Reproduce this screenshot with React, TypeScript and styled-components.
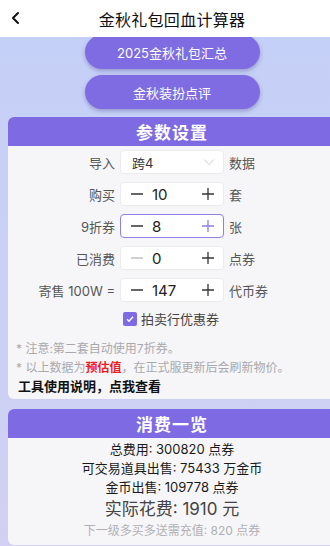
import { FC } from "react";
import styled, { createGlobalStyle } from "styled-components";

const GlobalStyle = createGlobalStyle`
  html, body {
    margin: 0;
    padding: 0;
    overflow-x: hidden;
    background: #c6cff7;
  }
  body {
    font-family: Inter, "Noto Sans CJK SC", "Noto Sans", sans-serif;
    -webkit-font-smoothing: antialiased;
  }
`;

const Page = styled.div`
  width: 344px;
  min-height: 546px;
  background: linear-gradient(180deg, #c4d0f8 0%, #cdd0f4 70%, #d3d0f2 100%);
`;

const Header = styled.header`
  position: relative;
  z-index: 2;
  height: 37px;
  background: #ffffff;
  display: flex;
  align-items: center;
  justify-content: center;
`;

const BackButton = styled.span`
  position: absolute;
  left: 10px;
  top: 10px;
  display: flex;
`;

const Title = styled.h1`
  margin: 0;
  font-size: 16px;
  font-weight: 400;
  color: #111;
  letter-spacing: 0.3px;
`;

const Main = styled.main`
  padding: 0 8px 10px;
  display: flex;
  flex-direction: column;
  align-items: center;
`;

const PillButton = styled.button<{ $first?: boolean }>`
  width: 175px;
  height: 34px;
  margin-top: ${(p) => (p.$first ? "-2px" : "6px")};
  border: none;
  border-radius: 17px;
  background: #7f6be2;
  color: #fff;
  font-family: inherit;
  font-size: 13px;
  box-shadow: 0 2px 4px rgba(60, 50, 120, 0.35);
`;

const Card = styled.section<{ $top: number }>`
  width: 100%;
  margin-top: ${(p) => p.$top}px;
  border-radius: 6px;
  overflow: hidden;
  background: #f6f6f8;
`;

const CardHeader = styled.div`
  height: 29px;
  background: #7e6ae2;
  color: #fff;
  font-size: 17px;
  font-weight: 700;
  display: flex;
  align-items: center;
  justify-content: center;
  letter-spacing: 1px;
`;

const Form = styled.div`
  padding-top: 4px;
  display: grid;
  grid-template-columns: 1fr 104px 1fr;
  column-gap: 5px;
  row-gap: 8px;
  align-items: center;
`;

const Label = styled.span`
  text-align: right;
  font-size: 13px;
  color: #555;
`;

const Suffix = styled.span`
  font-size: 13px;
  color: #555;
`;

const Field = styled.div<{ $focus?: boolean }>`
  box-sizing: border-box;
  height: 24px;
  background: #fff;
  border: 1px solid ${(p) => (p.$focus ? "#8e7fe6" : "#ececef")};
  border-radius: 4px;
  display: flex;
  align-items: center;
  padding: 0 8px 0 9px;
  font-size: 15px;
  color: #222;
`;

const SelectText = styled.span`
  flex: 1;
  font-size: 13px;
  color: #333;
  padding-left: 2px;
`;

const Value = styled.span`
  flex: 1;
  padding-left: 8px;
`;

const CheckRow = styled.label`
  grid-column: 1 / 4;
  display: flex;
  align-items: center;
  justify-content: center;
  gap: 4px;
  font-size: 13px;
  color: #444;
  margin-top: -1px;
  padding-right: 2px;
`;

const CheckBox = styled.span`
  width: 14px;
  height: 14px;
  border-radius: 2px;
  background: #7e6ae2;
  display: flex;
  align-items: center;
  justify-content: center;
`;

const Notes = styled.div`
  padding: 11px 8px 3px 8px;
`;

const Note = styled.p`
  margin: 0;
  font-size: 12px;
  line-height: 19px;
  color: #a9a9ad;
`;

const Warn = styled.strong`
  color: #ee1c1c;
  font-weight: 700;
`;

const Help = styled.p`
  margin: 0 0 0 2px;
  font-size: 13px;
  line-height: 19px;
  font-weight: 700;
  color: #111;
`;

const Summary = styled.div`
  padding: 2px 0 4px;
  display: flex;
  flex-direction: column;
  align-items: center;
`;

const Line = styled.p<{ $size?: number; $color?: string; $h?: number }>`
  margin: 0;
  font-size: ${(p) => p.$size ?? 13}px;
  line-height: ${(p) => p.$h ?? 19}px;
  color: ${(p) => p.$color ?? "#1a1a1a"};
`;

const Minus: FC<{ light?: boolean }> = ({ light }) => (
  <svg width="14" height="14" viewBox="0 0 14 14">
    <path d="M1 7h12" stroke={light ? "#b8b8bc" : "#333"} strokeWidth="1.3" />
  </svg>
);

const Plus: FC<{ color?: string }> = ({ color = "#333" }) => (
  <svg width="14" height="14" viewBox="0 0 14 14">
    <path d="M1 7h12M7 1v12" stroke={color} strokeWidth="1.3" />
  </svg>
);

const Stepper: FC<{ value: string; focus?: boolean; light?: boolean }> = ({ value, focus, light }) => (
  <Field $focus={focus}>
    <Minus light={light} />
    <Value>{value}</Value>
    <Plus color={focus ? "#8e7fe6" : "#333"} />
  </Field>
);

const App: FC = () => {
  return (
    <>
      <GlobalStyle />
      <Page>
        <Header>
          <BackButton>
            <svg width="12" height="16" viewBox="0 0 12 16">
              <path d="M8 3L3 8l5 5" fill="none" stroke="#111" strokeWidth="2" strokeLinecap="round" strokeLinejoin="round" />
            </svg>
          </BackButton>
          <Title>金秋礼包回血计算器</Title>
        </Header>
        <Main>
          <PillButton $first>2025金秋礼包汇总</PillButton>
          <PillButton>金秋装扮点评</PillButton>

          <Card $top={8}>
            <CardHeader>参数设置</CardHeader>
            <Form>
              <Label>导入</Label>
              <Field>
                <SelectText>跨4</SelectText>
                <svg width="12" height="8" viewBox="0 0 12 8">
                  <path d="M1 1.5l5 5 5-5" fill="none" stroke="#c8c8cc" strokeWidth="1" />
                </svg>
              </Field>
              <Suffix>数据</Suffix>

              <Label>购买</Label>
              <Stepper value="10" />
              <Suffix>套</Suffix>

              <Label>9折券</Label>
              <Stepper value="8" focus />
              <Suffix>张</Suffix>

              <Label>已消费</Label>
              <Stepper value="0" light />
              <Suffix>点券</Suffix>

              <Label>寄售 100W =</Label>
              <Stepper value="147" />
              <Suffix>代币券</Suffix>

              <CheckRow>
                <CheckBox>
                  <svg width="10" height="10" viewBox="0 0 10 10">
                    <path d="M2 5.2l2 2 4-4.4" fill="none" stroke="#fff" strokeWidth="1.4" />
                  </svg>
                </CheckBox>
                拍卖行优惠券
              </CheckRow>
            </Form>
            <Notes>
              <Note>* 注意:第二套自动使用7折券。</Note>
              <Note>
                * 以上数据为<Warn>预估值</Warn>，在正式服更新后会刷新物价。
              </Note>
              <Help>工具使用说明，点我查看</Help>
            </Notes>
          </Card>

          <Card $top={10}>
            <CardHeader>消费一览</CardHeader>
            <Summary>
              <Line>总费用: 300820 点券</Line>
              <Line>可交易道具出售: 75433 万金币</Line>
              <Line>金币出售: 109778 点券</Line>
              <Line $size={17} $h={24} $color="#444">实际花费: 1910 元</Line>
              <Line $size={12} $h={20} $color="#b0b0b4">下一级多买多送需充值: 820 点券</Line>
            </Summary>
          </Card>
        </Main>
      </Page>
    </>
  );
};

export default App;
